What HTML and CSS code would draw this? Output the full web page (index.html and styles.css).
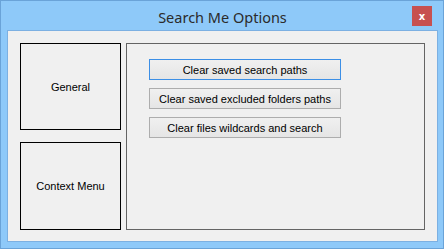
FILE: index.html
```html
<!DOCTYPE html>
<html lang="en">
<head>
  <meta charset="UTF-8">
  <title>Search Me Options</title>
  <link rel="stylesheet" href="styles.css">
</head>
<body>
  <div class="window">
    <div class="titlebar">
      <span class="title">Search Me Options</span>
      <button class="close-btn">x</button>
    </div>
    <div class="client">
      <div class="tabs">
        <div class="tab">General</div>
        <div class="tab tab-tall">Context Menu</div>
      </div>
      <div class="panel">
        <button class="action focused">Clear saved search paths</button>
        <button class="action">Clear saved excluded folders paths</button>
        <button class="action">Clear files wildcards and search</button>
      </div>
    </div>
  </div>
</body>
</html>
```
FILE: styles.css
```css
body {
  margin: 0;
  font-family: "Liberation Sans", Arial, sans-serif;
}
.window {
  width: 444px;
  height: 249px;
  box-sizing: border-box;
  border: 1px solid #6aa3d8;
  background-color: #8ec9f9;
  padding: 0 5px 6px 6px;
  display: flex;
  flex-direction: column;
}
.titlebar {
  height: 29px;
  position: relative;
  display: flex;
  align-items: center;
  justify-content: center;
}
.title {
  font-family: "Noto Sans", sans-serif;
  font-size: 14.5px;
  color: #2b2b2b;
  margin-top: 2px;
}
.close-btn {
  position: absolute;
  right: 6px;
  top: 5px;
  width: 20px;
  height: 20px;
  border: none;
  padding: 0;
  background-color: #c75050;
  color: white;
  font-family: "DejaVu Sans", sans-serif;
  font-weight: bold;
  font-size: 10px;
}
.client {
  flex: 1;
  background-color: #f0f0f0;
  border: 1px solid #7cb0e2;
  display: flex;
  padding: 12px 12px 11px 12px;
  gap: 5px;
}
.tabs {
  display: flex;
  flex-direction: column;
  gap: 12px;
}
.tab {
  width: 99px;
  height: 85px;
  border: 1px solid #000;
  display: flex;
  align-items: center;
  justify-content: center;
  font-size: 11px;
  color: #000;
}
.tab-tall {
  height: 86px;
}
.panel {
  width: 297px;
  border: 1px solid #646464;
  display: flex;
  flex-direction: column;
  align-items: flex-start;
  padding: 15px 0 0 22px;
  gap: 8px;
}
.action {
  width: 192px;
  height: 21px;
  border: 1px solid #adadad;
  background: linear-gradient(#f0f0f0, #e5e5e5);
  font-family: "Liberation Sans", Arial, sans-serif;
  font-size: 11px;
  color: #000;
  padding: 0;
}
.action.focused {
  border-color: #3c8fe6;
}
```
